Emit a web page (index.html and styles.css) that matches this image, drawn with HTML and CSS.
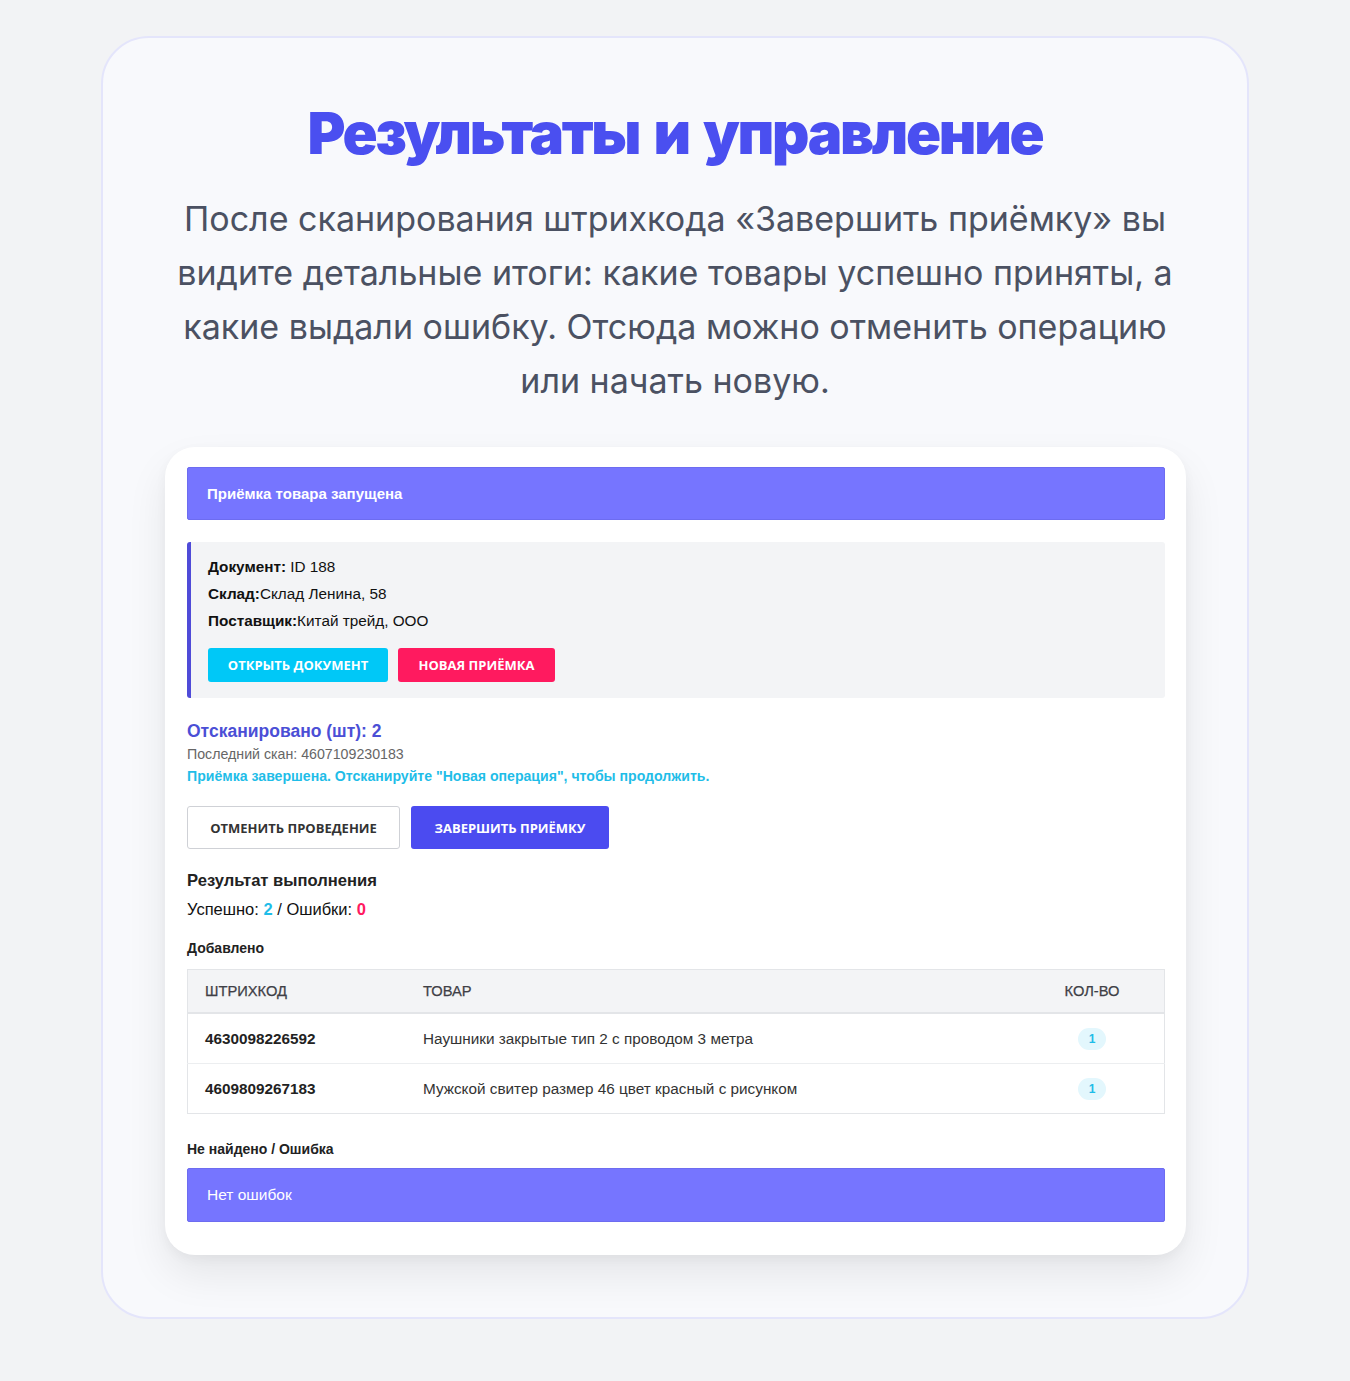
FILE: index.html
```html
<!DOCTYPE html>
<html lang="ru">
<head>
<meta charset="utf-8">
<title>Результаты и управление</title>
<link rel="stylesheet" href="styles.css">
</head>
<body>
<section class="panel">
  <h1 class="title">Результаты и управление</h1>
  <p class="lead">После сканирования штрихкода «Завершить приёмку» вы видите детальные итоги: какие товары успешно приняты, а какие выдали ошибку. Отсюда можно отменить операцию или начать новую.</p>

  <div class="shot">
    <div class="banner">Приёмка товара запущена</div>

    <div class="doc">
      <div class="doc-line"><b>Документ:</b> ID 188</div>
      <div class="doc-line"><b>Склад:</b>Склад Ленина, 58</div>
      <div class="doc-line"><b>Поставщик:</b>Китай трейд, ООО</div>
      <div class="doc-actions">
        <span class="btn btn-cyan">Открыть документ</span>
        <span class="btn btn-pink">Новая приёмка</span>
      </div>
    </div>

    <div class="scan-count">Отсканировано (шт): 2</div>
    <div class="scan-last">Последний скан: 4607109230183</div>
    <div class="scan-note">Приёмка завершена. Отсканируйте "Новая операция", чтобы продолжить.</div>

    <div class="actions">
      <span class="btn btn-outline btn-lg">Отменить проведение</span>
      <span class="btn btn-indigo btn-lg">Завершить приёмку</span>
    </div>

    <div class="result-title">Результат выполнения</div>
    <div class="result-stats">Успешно: <b class="ok">2</b> / Ошибки: <b class="err">0</b></div>

    <div class="sub">Добавлено</div>
    <table class="tbl">
      <thead>
        <tr><th class="c-code">Штрихкод</th><th>Товар</th><th class="c-qty">Кол-во</th></tr>
      </thead>
      <tbody>
        <tr><td class="c-code code">4630098226592</td><td>Наушники закрытые тип 2 с проводом 3 метра</td><td class="c-qty"><span class="qty">1</span></td></tr>
        <tr><td class="c-code code">4609809267183</td><td>Мужской свитер размер 46 цвет красный с рисунком</td><td class="c-qty"><span class="qty">1</span></td></tr>
      </tbody>
    </table>

    <div class="sub sub-err">Не найдено / Ошибка</div>
    <div class="banner banner-light">Нет ошибок</div>
  </div>
</section>
</body>
</html>
```

FILE: styles.css
```css
html, body {
  margin: 0;
  padding: 0;
  background: #f2f3f5;
}
body {
  padding: 36px 0 64px;
  font-family: Inter, "Noto Sans", sans-serif;
}
.panel {
  box-sizing: border-box;
  width: 1148px;
  margin: 0 auto;
  background: #f8f9fc;
  border: 2px solid #e4e5fb;
  border-radius: 48px;
  padding: 63px 62px 62px;
  text-align: center;
}
.title {
  margin: 0;
  font-family: Inter, sans-serif;
  font-weight: 900;
  font-size: 58px;
  line-height: 64px;
  letter-spacing: -2.3px;
  word-spacing: 5px;
  color: #4a4ff0;
}
.lead {
  margin: 27px auto 0;
  max-width: 1000px;
  font-family: Inter, sans-serif;
  font-weight: 400;
  font-size: 34px;
  line-height: 54px;
  color: #4b5162;
}
.shot {
  margin: 39px auto 0;
  width: 1021px;
  box-sizing: border-box;
  background: #ffffff;
  border-radius: 30px;
  box-shadow: 0 20px 40px rgba(0, 0, 0, 0.08), 0 4px 12px rgba(0, 0, 0, 0.04);
  padding: 20px 21px 33px 22px;
  text-align: left;
  font-family: "Liberation Sans", Arial, sans-serif;
  color: #222;
}
.banner {
  background: #7675ff;
  border: 1px solid #6d6cf0;
  border-radius: 2px;
  height: 53px;
  box-sizing: border-box;
  display: flex;
  align-items: center;
  padding: 0 19px;
  color: #fff;
  font-weight: 700;
  font-size: 15px;
}
.banner-light {
  font-weight: 400;
  font-size: 15.5px;
  height: 54px;
}
.doc {
  margin-top: 22px;
  background: #f3f4f6;
  border-left: 4px solid #4f4bd8;
  border-radius: 3px;
  padding: 11px 17px 16px;
  color: #111;
  font-size: 15.3px;
}
.doc-line {
  line-height: 27px;
}
.doc-line b {
  font-weight: 700;
}
.doc-actions {
  display: flex;
  gap: 10px;
  margin-top: 14px;
}
.btn {
  display: inline-flex;
  align-items: center;
  justify-content: center;
  box-sizing: border-box;
  font-family: "Open Sans", sans-serif;
  font-weight: 700;
  font-size: 13px;
  text-transform: uppercase;
  color: #fff;
  border-radius: 3px;
  height: 34px;
  padding: 0 16px;
}
.btn-cyan { background: #00c8f7; width: 180px; }
.btn-pink { background: #ff1a5f; width: 157px; }
.btn-lg { height: 43px; border-radius: 3px; }
.btn-outline {
  background: #fff;
  border: 1px solid #cfd1d6;
  color: #333;
  width: 213px;
}
.btn-indigo { background: #4b4bf0; width: 198px; }
.scan-count {
  margin-top: 22px;
  color: #4b4fd6;
  font-weight: 700;
  font-size: 17.5px;
  line-height: 22px;
}
.scan-last {
  margin-top: 2px;
  color: #666;
  font-size: 14.2px;
  line-height: 21px;
}
.scan-note {
  margin-top: 1px;
  color: #1fbde8;
  font-weight: 700;
  font-size: 14.1px;
  line-height: 21px;
}
.actions {
  display: flex;
  gap: 11px;
  margin-top: 19px;
}
.result-title {
  margin-top: 21px;
  font-weight: 700;
  font-size: 16.6px;
  line-height: 22px;
  color: #222;
}
.result-stats {
  margin-top: 6px;
  font-size: 16.5px;
  line-height: 22px;
  color: #111;
}
.ok { color: #1fbde8; }
.err { color: #ff1a5f; }
.sub {
  margin-top: 18px;
  font-weight: 700;
  font-size: 14px;
  line-height: 20px;
  color: #222;
}
.sub-err { margin-top: 25px; margin-bottom: 9px; }
.tbl {
  margin-top: 11px;
  width: 100%;
  border-collapse: collapse;
  border: 1px solid #e3e5e8;
  font-size: 15.3px;
}
.tbl th {
  background: #f3f4f6;
  text-align: left;
  font-weight: 400;
  font-size: 14.7px;
  text-transform: uppercase;
  color: #3f3f46;
  -webkit-text-stroke: 0.25px #3f3f46;
  height: 42px;
  padding: 0 17px;
  border-bottom: 2px solid #e3e5e8;
}
.tbl td {
  height: 49px;
  padding: 0 17px;
  color: #333;
  border-bottom: 1px solid #eceef0;
}
.tbl tbody tr:last-child td { border-bottom: none; }
.c-code { width: 184px; }
.c-qty { width: 110px; text-align: center !important; }
.code { font-weight: 700; color: #222 !important; }
.qty {
  display: inline-block;
  min-width: 28px;
  height: 22px;
  line-height: 22px;
  border-radius: 11px;
  background: #e3f7fd;
  color: #1fbde8;
  font-weight: 700;
  font-size: 12px;
  text-align: center;
}
```
